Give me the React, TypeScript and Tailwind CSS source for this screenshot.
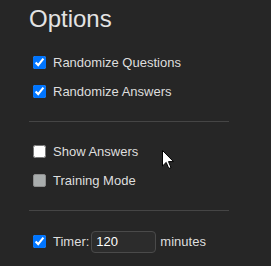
import React from 'react';

function Row({ children }: { children: React.ReactNode }) {
  return <label className="flex items-center h-[29px] text-[13px] text-[#dedede]">{children}</label>;
}

function Check({ checked, disabled }: { checked?: boolean; disabled?: boolean }) {
  if (disabled) {
    return <span className="ml-[4px] mr-[7px] w-[13px] h-[13px] rounded-[2px] bg-[#a9adad] border border-[#8c8c8c] shrink-0" />;
  }
  return (
    <input
      type="checkbox"
      defaultChecked={checked}
      className="ml-[4px] mr-[7px] w-[13px] h-[13px] shrink-0 accent-[#0075ff]"
    />
  );
}

export default function App() {
  return (
    <div
      className="relative w-[271px] h-[266px] bg-[#262626] pl-[29px] pt-[5px] overflow-hidden"
      style={{ fontFamily: '"Liberation Sans", Arial, sans-serif' }}
    >
      <h2 className="text-[24px] leading-[28px] text-[#e3e3e3]">Options</h2>

      <div className="mt-[15px]">
        <Row>
          <Check checked />
          Randomize Questions
        </Row>
        <Row>
          <Check checked />
          Randomize Answers
        </Row>
      </div>

      <div className="mt-[15px] w-[200px] h-px bg-[#454545]" />

      <div className="mt-[15px]">
        <Row>
          <Check />
          Show Answers
        </Row>
        <Row>
          <Check disabled />
          Training Mode
        </Row>
      </div>

      <div className="mt-[15px] w-[200px] h-px bg-[#454545]" />

      <div className="mt-4">
        <Row>
          <Check checked />
          Timer:
          <input
            type="text"
            defaultValue="120"
            className="ml-[2px] mr-[4px] w-[65px] h-[22px] rounded-[4px] border border-[#4a4a4a] bg-[#2c2c2c] pl-[4px] text-[13px] text-white outline-none"
          />
          minutes
        </Row>
      </div>

      <svg className="absolute left-[162px] top-[150px]" width="13" height="20" viewBox="0 0 13 20">
        <path d="M0.5 0.5 L0.5 16 L4.2 12.4 L6.8 18.5 L9 17.6 L6.5 11.6 L11.5 11.6 Z" fill="#fff" stroke="#000" strokeWidth="1" strokeLinejoin="round" />
      </svg>
    </div>
  );
}
